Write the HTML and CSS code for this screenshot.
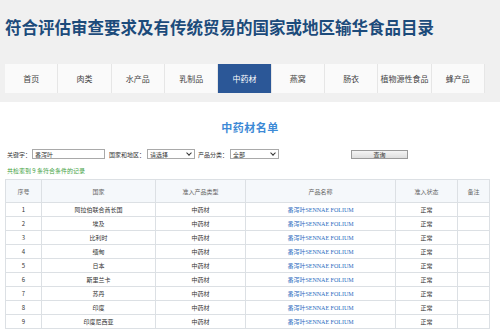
FILE: index.html
```html
<!DOCTYPE html>
<html lang="zh-CN">
<head>
  <meta charset="UTF-8" />
  <title>输华食品目录</title>
  <link rel="stylesheet" href="styles.css">
</head>
<body>

  <div class="top">
    <h1>符合评估审查要求及有传统贸易的国家或地区输华食品目录</h1>
    <ul class="nav">
      <li>首页</li>
      <li>肉类</li>
      <li>水产品</li>
      <li>乳制品</li>
      <li class="active">中药材</li>
      <li>燕窝</li>
      <li>肠衣</li>
      <li>植物源性食品</li>
      <li>蜂产品</li>
    </ul>
  </div>

  <div class="main">
    <h2>中药材名单</h2>

    <form class="search">
      <label>关键字：</label>
      <input type="text" class="kw" value="番泻叶">
      <label class="after">国家和地区：</label>
      <span class="sel sel-country">
        <select><option>请选择</option></select>
      </span>
      <label class="after-sel">产品分类：</label>
      <span class="sel sel-type">
        <select><option>全部</option></select>
      </span>
      <button type="button">查询</button>
    </form>

    <p class="count">共检索到 9 条符合条件的记录</p>

    <table class="list">
      <colgroup>
        <col style="width:36px">
        <col style="width:114px">
        <col style="width:90px">
        <col style="width:150px">
        <col style="width:62px">
        <col style="width:32px">
      </colgroup>
      <thead>
        <tr><th>序号</th><th>国家</th><th>准入产品类型</th><th>产品名称</th><th>准入状态</th><th>备注</th></tr>
      </thead>
      <tbody>
        <tr><td>1</td><td>阿拉伯联合酋长国</td><td>中药材</td><td><a href="#">番泻叶SENNAE FOLIUM</a></td><td>正常</td><td></td></tr>
        <tr><td>2</td><td>埃及</td><td>中药材</td><td><a href="#">番泻叶SENNAE FOLIUM</a></td><td>正常</td><td></td></tr>
        <tr><td>3</td><td>比利时</td><td>中药材</td><td><a href="#">番泻叶SENNAE FOLIUM</a></td><td>正常</td><td></td></tr>
        <tr><td>4</td><td>缅甸</td><td>中药材</td><td><a href="#">番泻叶SENNAE FOLIUM</a></td><td>正常</td><td></td></tr>
        <tr><td>5</td><td>日本</td><td>中药材</td><td><a href="#">番泻叶SENNAE FOLIUM</a></td><td>正常</td><td></td></tr>
        <tr><td>6</td><td>斯里兰卡</td><td>中药材</td><td><a href="#">番泻叶SENNAE FOLIUM</a></td><td>正常</td><td></td></tr>
        <tr><td>7</td><td>苏丹</td><td>中药材</td><td><a href="#">番泻叶SENNAE FOLIUM</a></td><td>正常</td><td></td></tr>
        <tr><td>8</td><td>印度</td><td>中药材</td><td><a href="#">番泻叶SENNAE FOLIUM</a></td><td>正常</td><td></td></tr>
        <tr><td>9</td><td>印度尼西亚</td><td>中药材</td><td><a href="#">番泻叶SENNAE FOLIUM</a></td><td>正常</td><td></td></tr>
      </tbody>
    </table>
  </div>

</body>
</html>
```

FILE: styles.css
```css
body {
  margin: 0;
  background-color: #ffffff;
  color: #333;
  font-family: "Noto Sans CJK SC", "Noto Sans", sans-serif;
}

.top {
  background-color: #f0f0f0;
  padding: 12px 5px 9px;
}

h1 {
  margin: 0;
  font-size: 16.5px;
  line-height: 30px;
  font-weight: bold;
  color: #1c4b7b;
  white-space: nowrap;
}

.nav {
  display: flex;
  width: 480px;
  margin: 22px 0 0;
  padding: 0;
  list-style: none;
}

.nav li {
  flex: 1;
  height: 29px;
  line-height: 29px;
  text-align: center;
  font-size: 8px;
  color: #444;
  background-color: #fafafa;
  border-right: 1px solid #e6e6e6;
  box-sizing: border-box;
}

.nav li.active {
  background-color: #2b5797;
  color: #fff;
}

.main {
  padding: 0 5px;
}

h2 {
  margin: 17px 0 0;
  text-align: center;
  font-size: 11px;
  line-height: 16px;
  letter-spacing: 0.5px;
  color: #3d8ad6;
  font-family: "Noto Sans CJK SC", serif;
}

.search {
  display: flex;
  align-items: center;
  height: 12px;
  margin-top: 13px;
  padding-left: 2px;
  font-size: 6px;
  color: #333;
}

.search label {
  white-space: nowrap;
}

.search .kw {
  width: 73px;
  height: 10px;
  box-sizing: border-box;
  margin: 0 0 0 1px;
  padding: 0 2px;
  border: 1px solid #a9a9a9;
  font-size: 6px;
  font-family: inherit;
  color: #333;
}

.search .after {
  margin-left: 4px;
}

.search .after-sel {
  margin-left: 3px;
}

.sel {
  position: relative;
  display: inline-block;
  height: 10px;
  margin-left: 2px;
}

.sel select {
  appearance: none;
  -webkit-appearance: none;
  height: 10px;
  box-sizing: border-box;
  margin: 0;
  padding: 0 2px;
  border: 1px solid #a9a9a9;
  border-radius: 0;
  background-color: #fff;
  font-size: 6px;
  font-family: inherit;
  color: #333;
}

.sel::after {
  content: "";
  position: absolute;
  right: 4px;
  top: 2px;
  width: 3px;
  height: 3px;
  border-right: 1px solid #333;
  border-bottom: 1px solid #333;
  transform: rotate(45deg);
}

.sel-country select {
  width: 48px;
}

.sel-type select {
  width: 49px;
}

.search button {
  width: 57px;
  height: 9px;
  margin-left: 72px;
  padding: 0;
  border: 1px solid #9a9a9a;
  background: linear-gradient(#f4f4f4, #dedede);
  font-size: 6px;
  line-height: 7px;
  font-family: inherit;
  color: #333;
}

.count {
  margin: 6px 0 0 2px;
  font-size: 6px;
  line-height: 10px;
  color: #3f9f3f;
}

.list {
  width: 484px;
  margin-top: 3px;
  border-collapse: collapse;
  table-layout: fixed;
  font-size: 6px;
}

.list th,
.list td {
  border: 1px solid #dce0e4;
  text-align: center;
  padding: 0;
}

.list th {
  height: 22px;
  font-weight: normal;
  color: #666;
  background-color: #f5f8fb;
}

.list td {
  height: 13px;
  color: #333;
}

.list a {
  color: #2a6cc0;
  text-decoration: none;
  font-family: "Liberation Serif", "Noto Sans CJK SC", serif;
}
```
